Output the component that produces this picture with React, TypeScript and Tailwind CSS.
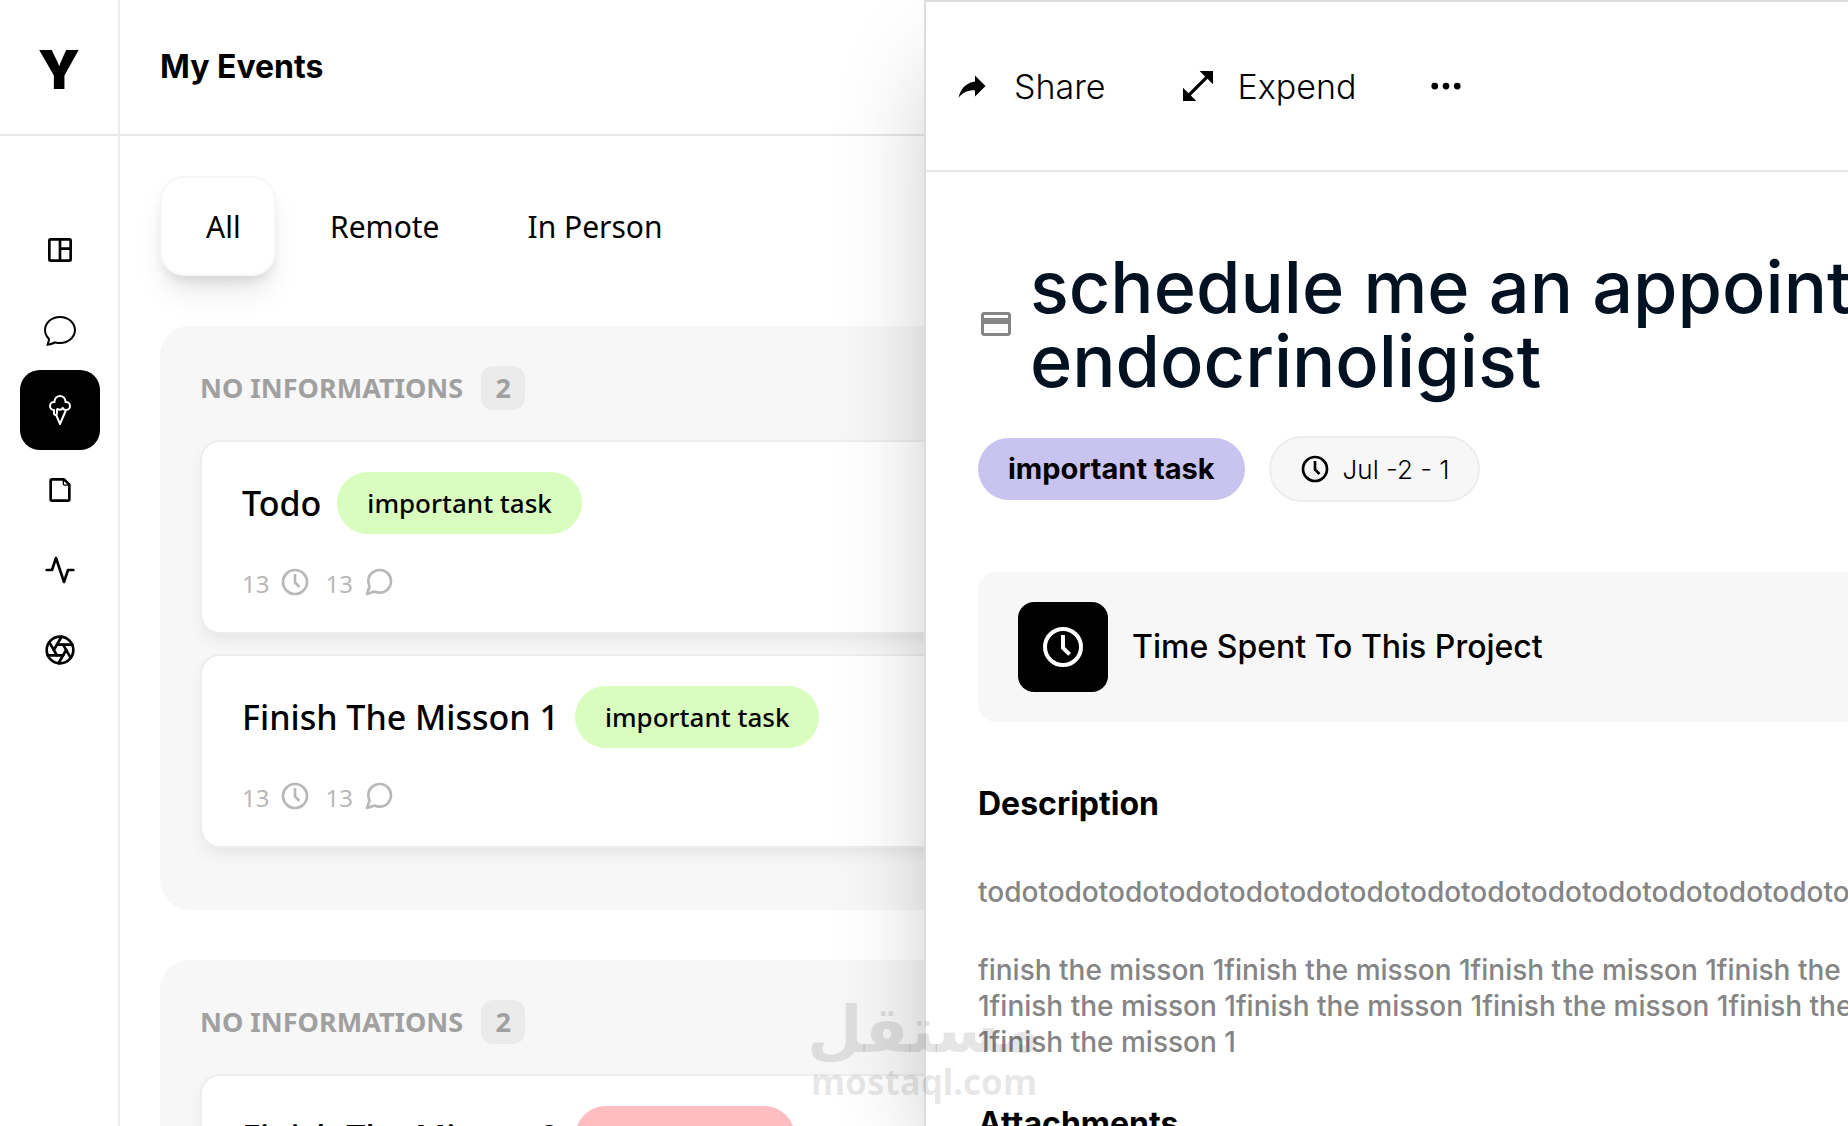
import type { ReactNode } from "react";
import { BsChat, BsThreeDots } from "react-icons/bs";
import { FiActivity, FiAperture, FiMessageCircle } from "react-icons/fi";
import { IoIceCreamOutline } from "react-icons/io5";
import { MdOpenInFull, MdPayment } from "react-icons/md";

function BoardIcon() {
  return (
    <svg viewBox="0 0 24 24" className="size-8" fill="none" stroke="currentColor" strokeWidth="2" strokeLinejoin="round">
      <rect x="4" y="4" width="16" height="16" rx="1" />
      <path d="M12 4v16M12 11h8" />
    </svg>
  );
}

function FileIcon() {
  return (
    <svg viewBox="0 0 24 24" className="size-8" fill="none" stroke="currentColor" strokeWidth="2" strokeLinejoin="round">
      <path d="M6 4h9l4 4v11a1 1 0 0 1-1 1H6a1 1 0 0 1-1-1V5a1 1 0 0 1 1-1z" />
      <path d="M14.5 4.2v3.2a1 1 0 0 0 1 1h3.2" strokeWidth="1" />
    </svg>
  );
}

function ClockIcon({ className }: { className: string }) {
  return (
    <svg viewBox="0 0 24 24" className={className} fill="none" stroke="currentColor" strokeWidth="2">
      <circle cx="12" cy="12" r="9" />
      <path d="M12 6v6.4l3.3 3.3" />
    </svg>
  );
}

function ShareIcon() {
  return (
    <svg viewBox="0 0 24 24" className="size-9" fill="currentColor">
      <path d="M14 9V5l7 7-7 7v-4.1c-5 0-8.5 1.6-11 5.1 1-5 4-10 11-11z" />
    </svg>
  );
}

const navItems: { label: string; icon: ReactNode; active?: boolean }[] = [
  { label: "Board", icon: <BoardIcon /> },
  { label: "Messages", icon: <BsChat className="size-8" /> },
  { label: "Events", icon: <IoIceCreamOutline className="size-8" />, active: true },
  { label: "Files", icon: <FileIcon /> },
  { label: "Activity", icon: <FiActivity className="size-8" /> },
  { label: "Gallery", icon: <FiAperture className="size-8" /> },
];

function Sidebar() {
  return (
    <aside className="flex w-[120px] shrink-0 flex-col border-r-2 border-[#ececec]">
      <div className="flex h-[136px] items-center justify-center border-b-2 border-gray-200 pt-1.5 text-[54px] leading-none font-black">
        Y
      </div>
      <nav className="flex flex-col items-center pt-[74px] pl-0.5">
        {navItems.map((item) => (
          <button
            key={item.label}
            aria-label={item.label}
            className={
              item.active
                ? "flex size-20 items-center justify-center rounded-[20px] bg-black text-white"
                : "flex size-20 items-center justify-center rounded-[20px]"
            }
          >
            {item.icon}
          </button>
        ))}
      </nav>
    </aside>
  );
}

function EventCard({ title, tag }: { title: string; tag?: string }) {
  return (
    <article className="flex flex-col gap-8 rounded-[20px] border-2 border-[#ededed] bg-white px-10 pt-[30px] pb-[34px] shadow-[0_8px_16px_-2px_rgba(0,0,0,0.07)]">
      <div className="flex items-center gap-4">
        <h3 className="text-[34px] leading-[48px] font-medium whitespace-nowrap">{title}</h3>
        {tag ? (
          <span className="flex h-[62px] items-center rounded-full bg-[#d9fdbf] px-[30px] text-[26px] font-medium whitespace-nowrap">
            {tag}
          </span>
        ) : (
          <span className="h-[62px] w-[220px] rounded-full bg-[#febdc1]" />
        )}
      </div>
      <div className="flex h-8 items-center text-2xl text-[#b8b8b8]">
        <span className="pt-1">13</span>
        <ClockIcon className="ml-2.5 size-8" />
        <span className="ml-3.5 pt-1">13</span>
        <FiMessageCircle className="ml-2.5 size-8" />
      </div>
    </article>
  );
}

function EventGroup({ count, children }: { count: number; children: ReactNode }) {
  return (
    <section className="rounded-[30px] bg-[#f7f7f7] px-10 pt-10 pb-[62px]">
      <div className="mb-[30px] flex items-center gap-[18px] text-[27px] font-bold text-[#a0a0a0]">
        <h2>NO INFORMATIONS</h2>
        <span className="flex size-11 items-center justify-center rounded-xl bg-[#ebebeb]">{count}</span>
      </div>
      <div className="flex flex-col gap-5">{children}</div>
    </section>
  );
}

function Tab({ label, active }: { label: string; active?: boolean }) {
  return (
    <button
      role="tab"
      aria-selected={!!active}
      className={
        active
          ? "h-[100px] min-w-[116px] rounded-3xl border-2 border-[#f7f7f7] bg-white pr-8 pl-11 text-left shadow-[0_20px_30px_-6px_rgba(0,0,0,0.1),0_8px_12px_-4px_rgba(0,0,0,0.1)]"
          : "h-[100px] rounded-3xl border-2 border-transparent pr-8 pl-11"
      }
    >
      {label}
    </button>
  );
}

function Events() {
  return (
    <main className="min-w-0 flex-1">
      <header className="flex h-[136px] items-center border-b-2 border-gray-200 px-10">
        <h1 className="text-[32px] font-bold">My Events</h1>
      </header>
      <div className="px-10 pt-10 font-['Noto_Sans','Open_Sans',sans-serif]">
        <div role="tablist" className="mb-[50px] flex gap-2 text-[30px]">
          <Tab label="All" active />
          <Tab label="Remote" />
          <Tab label="In Person" />
        </div>
        <div className="flex flex-col gap-[50px]">
          <EventGroup count={2}>
            <EventCard title="Todo" tag="important task" />
            <EventCard title="Finish The Misson 1" tag="important task" />
          </EventGroup>
          <EventGroup count={2}>
            <EventCard title="Finish The Misson 2" />
          </EventGroup>
        </div>
      </div>
    </main>
  );
}

function Details() {
  return (
    <section
      role="dialog"
      aria-label="Event details"
      className="absolute inset-y-0 right-0 w-1/2 overflow-hidden border-t-2 border-l-2 border-[#dcdcdc] bg-white shadow-[0_50px_100px_-24px_rgba(0,0,0,0.3)]"
    >
      <header className="flex h-[170px] items-center gap-[72px] border-b-2 border-gray-200 px-7 text-[34px] font-light">
        <button className="flex items-center gap-6">
          <ShareIcon />
          Share
        </button>
        <button className="flex items-center gap-5">
          <MdOpenInFull className="size-10" />
          Expend
        </button>
        <button aria-label="More">
          <BsThreeDots className="size-9" />
        </button>
      </header>

      <div className="pt-[78px] pl-[52px] whitespace-nowrap">
        <div className="flex items-center gap-4">
          <MdPayment className="size-9 shrink-0 text-[#858585]" />
          <h2 className="text-[72px] leading-[74px] font-medium text-[#001222]">
            schedule me an appointment
            <br />
            endocrinoligist
          </h2>
        </div>

        <div className="mt-[38px] flex items-center gap-6">
          <span className="flex h-[62px] items-center rounded-full bg-[#c9c3ef] px-[30px] text-[29px] font-bold">
            important task
          </span>
          <span className="flex h-[66px] items-center gap-3 rounded-full border-2 border-[#ececec] bg-[#f7f7f7] px-7 text-[26px] font-light">
            <ClockIcon className="size-8" />
            Jul -2 - 1
          </span>
        </div>

        <div className="mt-[70px] flex h-[150px] items-center gap-6 rounded-l-[18px] bg-[#f7f7f7] px-10">
          <span className="flex size-[90px] items-center justify-center rounded-2xl bg-black text-white">
            <ClockIcon className="size-12" />
          </span>
          <p className="text-[32px] font-medium">Time Spent To This Project</p>
        </div>

        <h3 className="mt-[58px] text-[32px] leading-[48px] font-bold">Description</h3>
        <div className="mt-[46px] text-[28px] leading-9 font-medium text-[#858585]">
          <p>todotodotodotodotodotodotodotodotodotodotodotodotodotodotodotodo</p>
          <p className="mt-[42px]">
            finish the misson 1finish the misson 1finish the misson 1finish the misson
            <br />
            1finish the misson 1finish the misson 1finish the misson 1finish the misson
            <br />
            1finish the misson 1
          </p>
        </div>
        <h3 className="mt-10 text-[32px] leading-[48px] font-bold">Attachments</h3>
      </div>
    </section>
  );
}

function Watermark() {
  return (
    <div className="pointer-events-none absolute bottom-6 left-[44%] flex w-[12%] flex-col items-center font-['Noto_Sans',sans-serif] font-bold text-black/10">
      <span lang="ar" dir="rtl" className="font-['DejaVu_Sans',sans-serif] text-[64px] leading-[64px]">
        مستقل
      </span>
      <span className="text-[35px] leading-10">mostaql.com</span>
    </div>
  );
}

export default function App() {
  return (
    <div className="relative flex h-screen overflow-hidden bg-white font-['Inter',sans-serif] text-black">
      <Sidebar />
      <Events />
      <Details />
      <Watermark />
    </div>
  );
}
